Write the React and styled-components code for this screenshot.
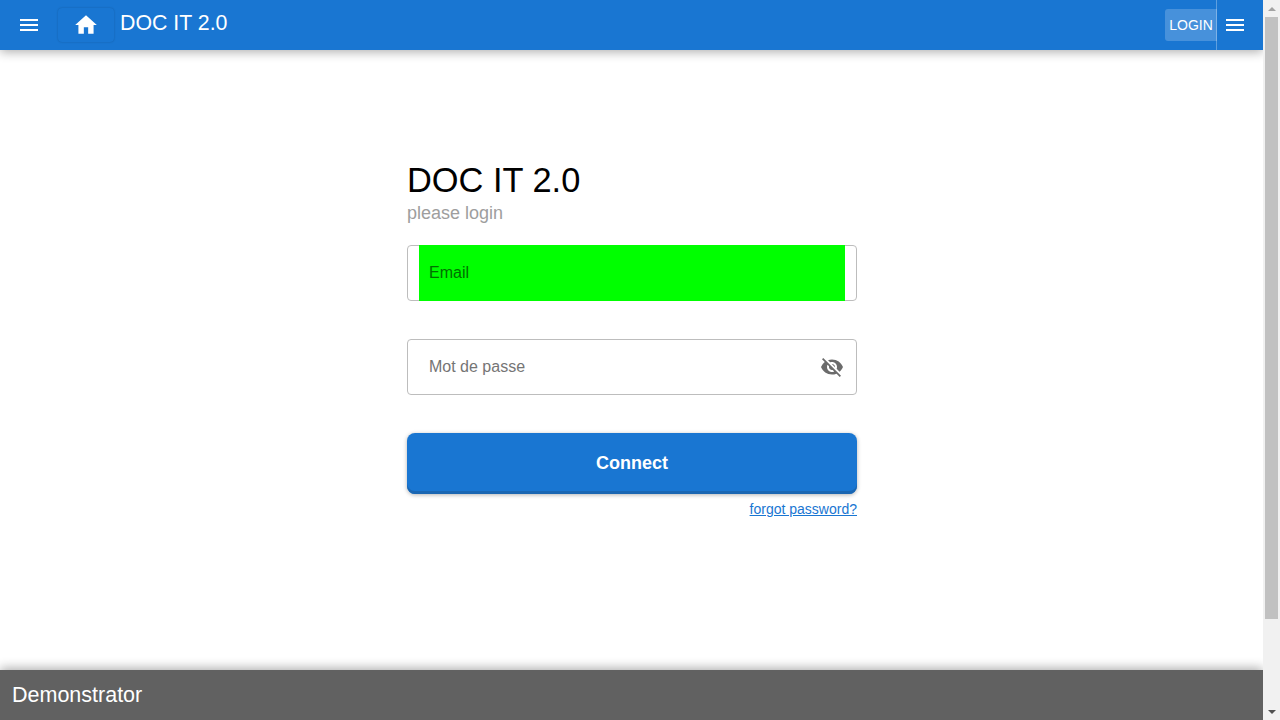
import React from 'react';
import styled, { createGlobalStyle } from 'styled-components';
import { MdMenu, MdHome, MdVisibilityOff } from 'react-icons/md';

const GlobalStyle = createGlobalStyle`
  html, body {
    margin: 0;
    height: 100%;
    overflow: hidden;
    font-family: 'Liberation Sans', Arial, sans-serif;
  }
  * {
    box-sizing: border-box;
  }
`;

export default function App() {
  return (
    <Page>
      <GlobalStyle />
      <Main>
        <Header>
          <IconButton aria-label="menu">
            <MdMenu size={24} />
          </IconButton>
          <HomeButton aria-label="home">
            <MdHome size={26} />
          </HomeButton>
          <AppTitle>DOC IT 2.0</AppTitle>
          <HeaderRight>
            <LoginButton>LOGIN</LoginButton>
            <SideMenuButton aria-label="side menu">
              <MdMenu size={24} />
            </SideMenuButton>
          </HeaderRight>
        </Header>
        <Content>
          <LoginForm>
            <FormTitle>DOC IT 2.0</FormTitle>
            <FormSubtitle>please login</FormSubtitle>
            <Field>
              <Input $autofill placeholder="Email" />
            </Field>
            <Field>
              <Input type="password" placeholder="Mot de passe" />
              <EyeIcon>
                <MdVisibilityOff size={24} />
              </EyeIcon>
            </Field>
            <ConnectButton>Connect</ConnectButton>
            <ForgotRow>
              <ForgotLink href="#">forgot password?</ForgotLink>
            </ForgotRow>
          </LoginForm>
        </Content>
        <Footer>Demonstrator</Footer>
      </Main>
      <Scrollbar>
        <ScrollArrow>
          <svg width="8" height="4" viewBox="0 0 8 4"><path d="M4 0L8 4H0z" fill="#a3a3a3" /></svg>
        </ScrollArrow>
        <ScrollThumb />
        <ScrollTrack />
        <ScrollArrow>
          <svg width="8" height="4" viewBox="0 0 8 4"><path d="M0 0h8L4 4z" fill="#505050" /></svg>
        </ScrollArrow>
      </Scrollbar>
    </Page>
  );
}

const Page = styled.div`
  display: flex;
  width: 1280px;
  height: 720px;
  background: #ffffff;
`;

const Main = styled.div`
  flex: 1;
  display: flex;
  flex-direction: column;
  min-width: 0;
`;

const Header = styled.header`
  height: 50px;
  flex: none;
  display: flex;
  align-items: center;
  padding-left: 17px;
  background-color: #1976d2;
  color: #ffffff;
  box-shadow: 0 2px 10px rgba(0, 0, 0, 0.32);
  z-index: 1;
`;

const IconButton = styled.button`
  width: 24px;
  height: 24px;
  padding: 0;
  display: flex;
  border: 0;
  background: none;
  color: inherit;
`;

const HomeButton = styled.button`
  width: 56px;
  height: 34px;
  margin-left: 17px;
  display: flex;
  align-items: center;
  justify-content: center;
  padding: 0;
  border: 0;
  border-radius: 4px;
  background: #1976d2;
  color: inherit;
  box-shadow: 0 0 2px rgba(0, 0, 0, 0.22);
`;

const AppTitle = styled.div`
  margin: -4px 0 0 6px;
  font-size: 21.33px;
  line-height: 28px;
`;

const HeaderRight = styled.div`
  margin-left: auto;
  display: flex;
  align-items: center;
  height: 100%;
`;

const LoginButton = styled.button`
  width: 52px;
  height: 32px;
  padding: 0;
  border: 0;
  border-radius: 3px 0 0 3px;
  background: rgba(255, 255, 255, 0.2);
  color: #ffffff;
  font-family: inherit;
  font-size: 14px;
`;

const SideMenuButton = styled.button`
  width: 47px;
  height: 100%;
  margin-left: -1px;
  padding: 0 0 0 6px;
  display: flex;
  align-items: center;
  border: 0;
  border-left: 1px solid rgba(255, 255, 255, 0.3);
  background: none;
  color: inherit;
`;

const Content = styled.main`
  flex: 1;
  display: flex;
  justify-content: center;
  padding: 110px 0 0 1px;
`;

const LoginForm = styled.form`
  width: 450px;
  display: flex;
  flex-direction: column;
`;

const FormTitle = styled.h1`
  margin: 0;
  font-size: 34.4px;
  font-weight: 400;
  line-height: 40px;
  color: #000000;
`;

const FormSubtitle = styled.div`
  margin: 1px 0 20px;
  font-size: 18px;
  line-height: 24px;
  color: #9e9e9e;
`;

const Field = styled.div`
  height: 56px;
  margin-bottom: 38px;
  padding: 0 11px;
  display: flex;
  align-items: center;
  border: 1px solid #bdbdbd;
  border-radius: 4px;
`;

const Input = styled.input`
  flex: 1;
  min-width: 0;
  height: 56px;
  margin: -1px 0;
  padding: 0 10px;
  border: 0;
  outline: 0;
  background: ${(props) => (props.$autofill ? '#00ff00' : 'transparent')};
  font-family: inherit;
  font-size: 16px;
  &::placeholder {
    color: ${(props) => (props.$autofill ? '#007000' : '#757575')};
    opacity: 1;
  }
`;

const EyeIcon = styled.span`
  display: flex;
  margin-right: 1px;
  color: #6b6b6b;
`;

const ConnectButton = styled.button`
  height: 61px;
  flex: none;
  padding: 0 0 1px;
  border: 0;
  border-radius: 8px;
  background: #1976d2;
  color: #ffffff;
  font-family: inherit;
  font-size: 18px;
  font-weight: 700;
  box-shadow: inset 0 -3px 0 #1a66b2, 0 1px 4px rgba(0, 0, 0, 0.3);
`;

const ForgotRow = styled.div`
  margin-top: 6px;
  display: flex;
  justify-content: flex-end;
`;

const ForgotLink = styled.a`
  font-size: 14px;
  line-height: 18px;
  color: #1976d2;
`;

const Footer = styled.footer`
  height: 50px;
  flex: none;
  padding-left: 12px;
  display: flex;
  align-items: center;
  background-color: #616161;
  color: #ffffff;
  font-size: 21.5px;
  box-shadow: 0 -2px 10px rgba(0, 0, 0, 0.32);
`;

const Scrollbar = styled.div`
  position: relative;
  z-index: 2;
  width: 17px;
  flex: none;
  display: flex;
  flex-direction: column;
  background: #f1f1f1;
`;

const ScrollArrow = styled.div`
  height: 17px;
  flex: none;
  display: flex;
  align-items: center;
  justify-content: center;
`;

const ScrollThumb = styled.div`
  height: 602px;
  flex: none;
  margin: 0 2px;
  background: #c1c1c1;
`;

const ScrollTrack = styled.div`
  flex: 1;
`;
